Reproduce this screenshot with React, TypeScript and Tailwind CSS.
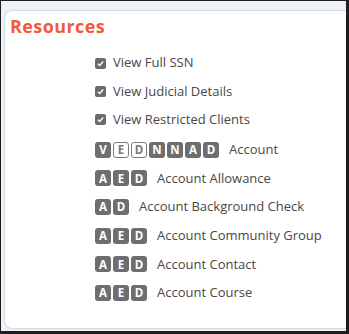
import React from "react";

type Perm = { letter: string; outline?: boolean };

const rows: { perms: Perm[]; label: string }[] = [
  {
    perms: [
      { letter: "V" },
      { letter: "E", outline: true },
      { letter: "D", outline: true },
      { letter: "N" },
      { letter: "N" },
      { letter: "A" },
      { letter: "D" },
    ],
    label: "Account",
  },
  { perms: [{ letter: "A" }, { letter: "E" }, { letter: "D" }], label: "Account Allowance" },
  { perms: [{ letter: "A" }, { letter: "D" }], label: "Account Background Check" },
  { perms: [{ letter: "A" }, { letter: "E" }, { letter: "D" }], label: "Account Community Group" },
  { perms: [{ letter: "A" }, { letter: "E" }, { letter: "D" }], label: "Account Contact" },
  { perms: [{ letter: "A" }, { letter: "E" }, { letter: "D" }], label: "Account Course" },
];

const checks = ["View Full SSN", "View Judicial Details", "View Restricted Clients"];

function Badge({ letter, outline }: Perm) {
  return (
    <span
      className={
        outline
          ? "flex h-[16px] w-[16px] items-center justify-center rounded-[3px] border border-[#7a7a7a] bg-white text-[11.5px] font-bold leading-none text-[#7a7a7a]"
          : "flex h-[16px] w-[16px] items-center justify-center rounded-[3px] bg-[#6e6e6e] text-[11.5px] font-bold leading-none text-white"
      }
    >
      {letter}
    </span>
  );
}

function CheckBox() {
  return (
    <span className="flex h-[11px] w-[11px] items-center justify-center rounded-[2px] bg-[#6b6b6b]">
      <svg viewBox="0 0 10 10" className="h-[9px] w-[9px]">
        <path d="M2 5.2 L4.2 7.2 L8 2.8" fill="none" stroke="white" strokeWidth="1.6" />
      </svg>
    </span>
  );
}

export default function App() {
  return (
    <div
      className="flex h-[334px] w-[349px] bg-[#1e1e1e] pt-px pl-px pr-[3px] pb-[3px]"
      style={{ fontFamily: '"Open Sans", "Noto Sans", sans-serif' }}
    >
      <div className="flex flex-1 bg-[#eef1f6] pt-[9px] pl-[3px] pb-[2px]">
        <div className="flex-1 rounded-l-lg rounded-r-none border border-r-0 border-[#d4d9e3] bg-white px-[5px] pt-[3px]">
          <h2 className="text-[18px] font-bold leading-[24px] tracking-[0.4px] text-[#f25a3b]">Resources</h2>
          <div className="mt-[16.5px] flex flex-col gap-[11.3px] pl-[85px] text-[13px] text-[#474747]">
            {checks.map((c) => (
              <div key={c} className="flex h-[17px] items-center gap-[7px]">
                <CheckBox />
                <span>{c}</span>
              </div>
            ))}
          </div>
          <div className="mt-[13.5px] flex flex-col gap-[12.7px] pl-[85px] text-[13px] text-[#474747]">
            {rows.map((r) => (
              <div key={r.label} className="flex h-[16px] items-center">
                <div className="flex gap-[2px]">
                  {r.perms.map((p, i) => (
                    <Badge key={i} {...p} />
                  ))}
                </div>
                <span className="ml-[10px]">{r.label}</span>
              </div>
            ))}
          </div>
        </div>
      </div>
    </div>
  );
}
